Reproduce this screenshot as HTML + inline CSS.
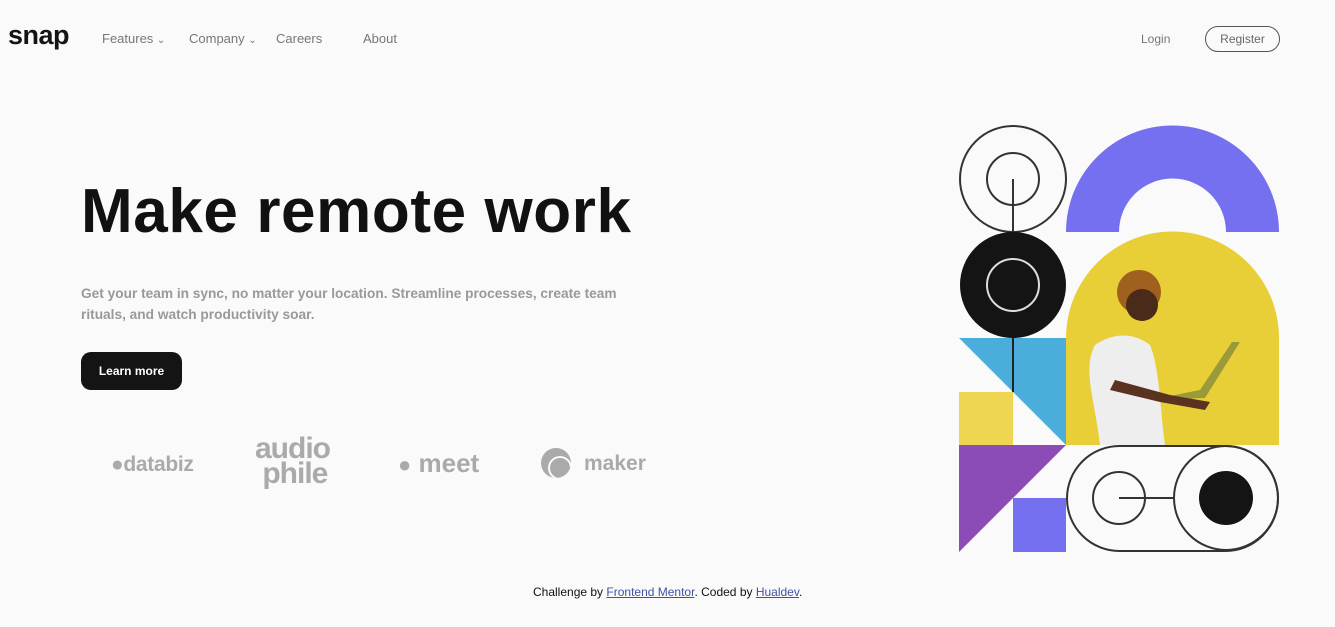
<!DOCTYPE html>
<html><head><meta charset="utf-8"><style>
body{margin:0;width:1335px;height:627px;background:#fafafa;font-family:"Liberation Sans",sans-serif;position:relative;overflow:hidden}
.a{position:absolute;white-space:nowrap}
.nav{color:#777;font-size:13px}
</style></head><body>
<div class="a" style="left:8px;top:20px;font-size:27px;font-weight:bold;color:#141414;letter-spacing:-0.5px">snap</div>
<div class="a nav" style="left:102px;top:31px">Features <span style="font-size:10px">&#8964;</span></div>
<div class="a nav" style="left:189px;top:31px">Company <span style="font-size:10px">&#8964;</span></div>
<div class="a nav" style="left:276px;top:31px">Careers</div>
<div class="a nav" style="left:363px;top:31px">About</div>
<div class="a nav" style="left:1141px;top:32px;font-size:12px">Login</div>
<div class="a" style="left:1205px;top:26px;width:75px;height:26px;border:1px solid #555;border-radius:13px;box-sizing:border-box;font-size:12px;color:#666;text-align:center;line-height:24px">Register</div>
<div class="a" style="left:81px;top:176px;font-size:62px;font-weight:bold;color:#111;letter-spacing:0.6px">Make remote work</div>
<div class="a" style="left:81px;top:283px;font-size:13.7px;font-weight:bold;color:#999;line-height:21px;white-space:normal;width:560px">Get your team in sync, no matter your location. Streamline processes, create team rituals, and watch productivity soar.</div>
<div class="a" style="left:81px;top:352px;width:101px;height:38px;background:#141414;border-radius:10px;color:#fff;font-size:12px;font-weight:bold;text-align:center;line-height:38px">Learn more</div>
<div class="a" style="left:111px;top:453px;font-size:21px;font-weight:bold;color:#aaa;letter-spacing:-0.3px">●databiz</div>
<div class="a" style="left:255px;top:436px;font-size:30px;font-weight:bold;color:#aaa;line-height:25px;letter-spacing:-1px">audio<br>&nbsp;phile</div>
<div class="a" style="left:398px;top:448px;font-size:26px;font-weight:bold;color:#aaa"><span style="font-size:22px">●</span> meet</div>
<div class="a" style="left:541px;top:448px;width:30px;height:30px;border-radius:50%;background:#aaa"></div>
<div class="a" style="left:548px;top:456px;width:20px;height:20px;border-radius:50%;border:2px solid #fafafa"></div>
<div class="a" style="left:584px;top:452px;font-size:21px;font-weight:bold;color:#aaa">maker</div>
<svg class="a" style="left:0;top:0" width="1335" height="627">
<path d="M1066 232A106 106 0 0 1 1279 232H1226A53 53 0 0 0 1119 232Z" fill="#7470ef"/>
<circle cx="1013" cy="179" r="53" fill="none" stroke="#333" stroke-width="2"/>
<circle cx="1013" cy="179" r="26" fill="none" stroke="#333" stroke-width="2"/>
<circle cx="1013" cy="285" r="53" fill="#141414"/>
<circle cx="1013" cy="285" r="26" fill="none" stroke="#ddd" stroke-width="2"/>
<polygon points="959,338 1066,338 1066,445" fill="#4badd9"/>
<rect x="959" y="392" width="54" height="53" fill="#efd652"/>
<line x1="1013" y1="179" x2="1013" y2="232" stroke="#333" stroke-width="2"/>
<line x1="1013" y1="338" x2="1013" y2="392" stroke="#222" stroke-width="2"/>
<polygon points="959,445 1066,445 959,552" fill="#8c4bb5"/>
<rect x="1013" y="498" width="53" height="54" fill="#7470ef"/>
<path d="M1066 338A106 106 0 0 1 1279 338V445H1066Z" fill="#e8cf38"/>
<path d="M1100 445C1095 400 1082 370 1095 345C1110 335 1130 330 1150 345C1160 370 1160 410 1165 445Z" fill="#eee"/>
<circle cx="1139" cy="292" r="22" fill="#a0601e"/>
<circle cx="1142" cy="305" r="16" fill="#4a2a18"/>
<path d="M1150 400L1200 390L1232 342L1240 342L1205 398Z" fill="#9a9a3a"/>
<path d="M1115 380L1170 395L1210 402L1205 410L1160 402L1110 390Z" fill="#5a3320"/>
<rect x="1067" y="446" width="211" height="105" rx="52.5" fill="none" stroke="#333" stroke-width="2"/>
<circle cx="1119" cy="498" r="26" fill="none" stroke="#333" stroke-width="2"/>
<circle cx="1226" cy="498" r="52" fill="none" stroke="#333" stroke-width="2"/>
<circle cx="1226" cy="498" r="27" fill="#141414"/>
<line x1="1119" y1="498" x2="1173" y2="498" stroke="#333" stroke-width="2"/>
</svg>
<div class="a" style="left:533px;top:585px;font-size:12px;color:#111">Challenge by <u style="color:#3e52a3">Frontend Mentor</u>. Coded by <u style="color:#3e52a3">Hualdev</u>.</div>
</body></html>
